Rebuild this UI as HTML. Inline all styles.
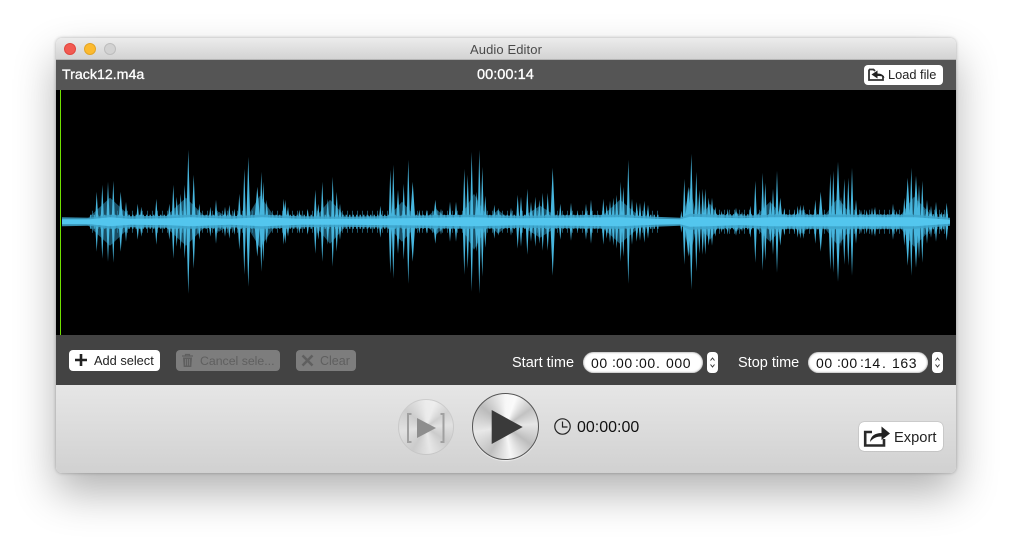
<!DOCTYPE html>
<html><head><meta charset="utf-8"><title>Audio Editor</title>
<style>
html,body{margin:0;padding:0;background:#fff}
body{width:1012px;height:547px;overflow:hidden;position:relative;font-family:"Liberation Sans",sans-serif}
.a{position:absolute}
.win{left:56px;top:38px;width:900px;height:435px;border-radius:6px;box-shadow:0 20px 42px rgba(0,0,0,.3),0 0 3px rgba(0,0,0,.3)}
.title{left:56px;top:38px;width:900px;height:22px;border-radius:6px 6px 0 0;background:linear-gradient(#ececec,#d3d3d3);box-sizing:border-box;border-bottom:1px solid #b4b4b4;text-align:center;font-size:13px;line-height:23px;color:#4a4a4a;letter-spacing:.1px}
.dot{width:12px;height:12px;border-radius:50%;top:43px;box-sizing:border-box}
.btn{background:#fff;border-radius:4px;color:#222;font-size:12px;white-space:nowrap}
.dis{background:#7d7d7d;border-radius:4px;color:#5f5f5f;font-size:12px;white-space:nowrap}
.t{white-space:nowrap}
.field{background:#fff;border-radius:11px;height:21px;width:120px;top:352px;box-shadow:inset 0 0 2px #777}
.field span{position:absolute;top:0;font-size:14px;line-height:23px;color:#111;letter-spacing:.6px;white-space:pre}
.field span.c{top:-1.500px;letter-spacing:0}
.step{background:#fff;border-radius:4px;width:11px;height:21px;top:352px}
.metal{border-radius:50%;background:conic-gradient(#f7f7f7 0deg,#fafafa 20deg,#c2c2c2 55deg,#e6e6e6 85deg,#bdbdbd 125deg,#f6f6f6 170deg,#c0c0c0 210deg,#e8e8e8 260deg,#bbb 310deg,#f7f7f7 360deg);box-sizing:border-box}
</style></head>
<body>
<div class="a win"></div>
<div class="a" style="left:56px;top:60px;width:900px;height:413px;border-radius:0 0 6px 6px;overflow:hidden">
  <div class="a" style="left:0;top:0;width:900px;height:30px;background:#555"></div>
  <div class="a" style="left:0;top:30px;width:900px;height:245px;background:#000"></div>
  <div class="a" style="left:0;top:275px;width:900px;height:50px;background:#434343"></div>
  <div class="a" style="left:0;top:325px;width:900px;height:88px;background:linear-gradient(#e6e6e6,#d1d1d1)"></div>
</div>
<div class="a title">Audio Editor</div>
<div class="a dot" style="left:64px;background:#f25a52;border:1px solid #e2463e"></div>
<div class="a dot" style="left:84px;background:#fcba2f;border:1px solid #e3a526"></div>
<div class="a dot" style="left:104px;background:#d2d2d2;border:1px solid #bdbdbd"></div>

<div class="a t" style="left:62px;top:67px;font-size:14.200px;line-height:16px;color:#fff;-webkit-text-stroke:.3px #fff">Track12.m4a</div>
<div class="a t" style="left:477px;top:67px;font-size:14.600px;line-height:16px;color:#fff;-webkit-text-stroke:.3px #fff">00:00:14</div>

<div class="a btn" style="left:864px;top:65px;width:79px;height:20px"></div>
<svg class="a" style="left:867px;top:66px" width="20" height="17" viewBox="0 0 20 17"><path d="M2 3.500H6.500L8 5M2 3.500V14H16V10" fill="none" stroke="#333" stroke-width="1.800"/><path d="M17.500 12C17 9 14 7.500 10.500 7.500V4.500L4.500 8.500L10.500 12.500V10C13 9.800 15.500 10 17.500 12Z" fill="#222"/></svg>
<div class="a t" style="left:888px;top:68px;font-size:12.800px;line-height:14px;color:#222">Load file</div>

<div class="a" style="left:60px;top:90px;width:1px;height:245px;background:#6fe000"></div>

<svg class="a" style="left:56px;top:90px" width="900" height="245" viewBox="56 90 900 245">
<defs><filter id="b" x="0" y="-20%" width="100%" height="140%"><feGaussianBlur stdDeviation=".35"/></filter></defs>
<g transform="translate(0 221.800)" filter="url(#b)">
<path fill="#2f8db2" opacity=".55" d="M84 0l26-24 26 24-26 24zM160 0l26-24 24 24-24 24zM244 0l16-26 18 26-18 26zM312 0l18-22 20 22-20 22zM384 0l18-20 18 20-18 20zM458 0l16-28 16 28-16 28zM515 0l25-16 25 16-25 16zM596 0l24-22 26 22-26 22zM682 0l8-34 8 34-8 34zM698 0l12-18 12 18-12 18zM750 0l20-20 18 20-18 20zM820 0l18-24 18 24-18 24zM896 0l18-25 24 25-24 25zM205 0l14-10 14 10-14 10zM422 0l14-13 14 13-14 13zM486 0l12-12 14 12-14 12zM726 0l10-10 12 10-12 10zM792 0l10-12 12 12-12 12z"/>
<line x1="92" x2="660" y1="0" y2="0" stroke="#3797bd" stroke-width="22" stroke-dasharray="1 4" opacity=".55"/>
<line x1="684" x2="946" y1="0" y2="0" stroke="#3797bd" stroke-width="24" stroke-dasharray="1 4" opacity=".55"/>
<line x1="90" x2="660" y1="0" y2="0" stroke="#43afd7" stroke-width="14" stroke-dasharray="1.500 2" opacity=".85"/>
<line x1="684" x2="948" y1="0" y2="0" stroke="#43afd7" stroke-width="15" stroke-dasharray="1.500 2" opacity=".85"/>
<path fill="#46b6de" d="M95 0l1.700-30 1.700 30-1.700 30zM100.600 0l1.700-37 1.700 37-1.700 37zM106.300 0l1.700-40 1.700 40-1.700 40zM111.600 0l1.700-41 1.700 41-1.700 41zM118.500 0l2.200-30 2.200 30-2.200 30zM124.300 0l1.700-20 1.700 20-1.700 20zM136 0l1.700-18 1.700 18-1.700 18zM139.600 0l1.700-15 1.700 15-1.700 15zM154.600 0l1.700-23 1.700 23-1.700 23zM167.600 0l1.700-18 1.700 18-1.700 18zM171.600 0l1.700-37 1.700 37-1.700 37zM175 0l1.700-25 1.700 25-1.700 25zM179 0l1.700-28 1.700 28-1.700 28zM183 0l1.700-37 1.700 37-1.700 37zM186.300 0l2-72 2 72-2 72zM191.700 0l2-47 2 47-2 47zM197.600 0l1.700-18 1.700 18-1.700 18zM208.600 0l1.700-15 1.700 15-1.700 15zM214.300 0l1.700-22 1.700 22-1.700 22zM223.300 0l1.700-15 1.700 15-1.700 15zM227.600 0l1.700-17 1.700 17-1.700 17zM232.600 0l1.700-13 1.700 13-1.700 13zM237.600 0l1.700-28 1.700 28-1.700 28zM242.600 0l1.700-53 1.700 53-1.700 53zM246.300 0l2-65 2 65-2 65zM254.300 0l3-35 3 35-3 35zM259.600 0l1.700-50 1.700 50-1.700 50zM261.600 0l1.700-40 1.700 40-1.700 40zM265 0l1.700-22 1.700 22-1.700 22zM282 0l1.700-23 1.700 23-1.700 23zM283.600 0l1.700-22 1.700 22-1.700 22zM286.300 0l1.700-15 1.700 15-1.700 15zM297.600 0l1.700-12 1.700 12-1.700 12zM306 0l1.700-13 1.700 13-1.700 13zM313.600 0l1.700-32 1.700 32-1.700 32zM316.600 0l1.700-18 1.700 18-1.700 18zM320.600 0l1.700-40 1.700 40-1.700 40zM326 0l1.700-23 1.700 23-1.700 23zM331 0l1.700-45 1.700 45-1.700 45zM335 0l1.700-30 1.700 30-1.700 30zM338.300 0l1.700-18 1.700 18-1.700 18z"/>
<path fill="#46b6de" d="M367 0l1.700-7 1.700 7-1.700 7zM378.600 0l1.700-16 1.700 16-1.700 16zM388.600 0l1.700-52 1.700 52-1.700 52zM391.600 0l1.700-57 1.700 57-1.700 57zM396 0l2-32 2 32-2 32zM402 0l1.700-38 1.700 38-1.700 38zM406.600 0l1.700-62 1.700 62-1.700 62zM410 0l2.700-40 2.700 40-2.700 40zM417.600 0l1.700-12 1.700 12-1.700 12zM425 0l1.700-12 1.700 12-1.700 12zM433 0l2.300-22 2.300 22-2.300 22zM439.300 0l1.700-13 1.700 13-1.700 13zM448.300 0l1.700-20 1.700 20-1.700 20zM454.300 0l1.700-20 1.700 20-1.700 20zM462.600 0l1.700-53 1.700 53-1.700 53zM466 0l1.700-47 1.700 47-1.700 47zM470 0l1.700-70 1.700 70-1.700 70zM474.600 0l2.100-30 2.100 30-2.100 30zM477.600 0l1.700-72 1.700 72-1.700 72zM480.600 0l1.700-55 1.700 55-1.700 55zM483.600 0l1.700-26 1.700 26-1.700 26zM492.600 0l1.700-17 1.700 17-1.700 17zM497 0l1.700-14 1.700 14-1.700 14zM509.300 0l1.700-14 1.700 14-1.700 14zM516 0l1.700-27 1.700 27-1.700 27zM519.300 0l1.700-25 1.700 25-1.700 25zM525.600 0l1.700-33 1.700 33-1.700 33zM529.300 0l1.700-20 1.700 20-1.700 20zM533.600 0l1.700-25 1.700 25-1.700 25zM537.600 0l1.700-22 1.700 22-1.700 22zM541 0l1.700-29 1.700 29-1.700 29zM546 0l1.700-29 1.700 29-1.700 29zM550.300 0l2.400-54 2.400 54-2.400 54zM558.600 0l1.700-18 1.700 18-1.700 18zM569.300 0l1.700-19 1.700 19-1.700 19zM576 0l1.700-10 1.700 10-1.700 10zM584.300 0l1.700-18 1.700 18-1.700 18zM589.300 0l1.700-22 1.700 22-1.700 22zM601.600 0l1.700-23 1.700 23-1.700 23zM605 0l1.700-17 1.700 17-1.700 17zM608.300 0l1.700-21 1.700 21-1.700 21zM611.600 0l1.700-24 1.700 24-1.700 24zM615 0l1.700-27 1.700 27-1.700 27zM619 0l1.700-40 1.700 40-1.700 40zM621.600 0l1.700-35 1.700 35-1.700 35zM626.600 0l1.700-62 1.700 62-1.700 62zM630.300 0l1.700-23 1.700 23-1.700 23zM635 0l1.700-20 1.700 20-1.700 20zM638.300 0l1.700-19 1.700 19-1.700 19zM642.600 0l1.700-21 1.700 21-1.700 21zM646.300 0l1.700-17 1.700 17-1.700 17z"/>
<path fill="#46b6de" d="M680 0l1.300-11 1.300 11-1.300 11zM682.600 0l1.700-43 1.700 43-1.700 43zM685 0l3.300-35 3.300 35-3.300 35zM689.300 0l2-68 2 68-2 68zM694.600 0l1.700-50 1.700 50-1.700 50zM697.600 0l1.700-32 1.700 32-1.700 32zM701 0l1.700-33 1.700 33-1.700 33zM703.600 0l1.700-33 1.700 33-1.700 33zM706.600 0l2.100-24 2.100 24-2.100 24zM710 0l2-24 2 24-2 24zM713.600 0l1.700-15 1.700 15-1.700 15zM720 0l1.700-11 1.700 11-1.700 11zM726 0l1.700-13 1.700 13-1.700 13zM734 0l2-14 2 14-2 14zM740.300 0l1.700-10 1.700 10-1.700 10zM748.600 0l1.700-16 1.700 16-1.700 16zM753.600 0l1.700-41 1.700 41-1.700 41zM761 0l1.700-49 1.700 49-1.700 49zM763.600 0l1.700-39 1.700 39-1.700 39zM768.600 0l1.700-22 1.700 22-1.700 22zM771.300 0l1.700-33 1.700 33-1.700 33zM775.300 0l1.700-51 1.700 51-1.700 51zM778 0l2.300-24 2.300 24-2.300 24zM782.600 0l1.700-14 1.700 14-1.700 14zM792.600 0l1.700-11 1.700 11-1.700 11zM796 0l1.700-16 1.700 16-1.700 16zM798.600 0l1.700-17 1.700 17-1.700 17zM801.600 0l1.700-17 1.700 17-1.700 17zM813.600 0l1.700-22 1.700 22-1.700 22zM818.300 0l2.400-30 2.400 30-2.400 30zM828.600 0l1.700-48 1.700 48-1.700 48zM831.600 0l1.700-51 1.700 51-1.700 51zM835.600 0l2.400-60 2.400 60-2.400 60zM839.300 0l1.700-25 1.700 25-1.700 25zM842.600 0l1.700-43 1.700 43-1.700 43zM846.600 0l1.700-44 1.700 44-1.700 44zM850.300 0l1.700-54 1.700 54-1.700 54zM854.300 0l1.700-22 1.700 22-1.700 22zM859.300 0l1.700-12 1.700 12-1.700 12zM865 0l1.700-12 1.700 12-1.700 12zM870.300 0l1.700-14 1.700 14-1.700 14zM873.300 0l1.700-15 1.700 15-1.700 15zM877 0l1.700-8 1.700 8-1.700 8zM891.300 0l1.700-18 1.700 18-1.700 18zM895 0l1.700-11 1.700 11-1.700 11zM902.600 0l1.700-24 1.700 24-1.700 24zM905 0l2.700-44 2.700 44-2.700 44zM909.600 0l1.700-54 1.700 54-1.700 54zM913.300 0l2.700-46 2.700 46-2.700 46zM917.300 0l1.700-37 1.700 37-1.700 37zM920.600 0l1.700-41 1.700 41-1.700 41zM925.300 0l1.700-22 1.700 22-1.700 22zM929.300 0l1.700-16 1.700 16-1.700 16zM934.300 0l1.700-20 1.700 20-1.700 20zM940 0l1.700-10 1.700 10-1.700 10zM945 0l1.700-19 1.700 19-1.700 19z"/>
<path fill="#3ea6cd" opacity=".85" d="M62 -4.500L90 -4L110 -7L130 -5.500L170 -6L190 -7L230 -5.500L262 -7L300 -5.500L345 -5L400 -6L470 -7L520 -6L620 -7L655 -5L680 -4L690 -8L740 -6L770 -7L840 -7L915 -7L950 -4L950 4L915 7L840 7L770 7L740 6L690 8L680 4L655 5L620 7L520 6L470 7L400 6L345 5L300 5.500L262 7L230 5.500L190 7L170 6L130 5.500L110 7L90 4L62 4.500Z"/>
<path fill="#52c6ee" d="M62 -2.500L90 -2.500L110 -4.500L130 -3L170 -3.500L190 -4.500L230 -3L262 -4.500L300 -3L345 -3L400 -3.500L470 -4.500L520 -3.500L620 -4.500L655 -3L680 -2.500L690 -5L740 -3.500L770 -4.500L840 -4.500L915 -4.500L950 -2L950 2L915 4.500L840 4.500L770 4.500L740 3.500L690 5L680 2.500L655 3L620 4.500L520 3.500L470 4.500L400 3.500L345 3L300 3L262 4.500L230 3L190 4.500L170 3.500L130 3L110 4.500L90 2.500L62 2.500Z"/>
</g>
</svg>

<div class="a btn" style="left:69px;top:350px;width:91px;height:21px"></div>
<svg class="a" style="left:74px;top:353px" width="14" height="14" viewBox="0 0 14 14"><path d="M7 1V13M1 7H13" stroke="#222" stroke-width="2.600"/></svg>
<div class="a t" style="left:94px;top:354px;font-size:12.800px;line-height:14px;color:#222">Add select</div>

<div class="a dis" style="left:176px;top:350px;width:104px;height:21px"></div>
<svg class="a" style="left:181px;top:353px" width="13" height="15" viewBox="0 0 13 15"><path d="M1 3H12M4.500 3V1.500H8.500V3" stroke="#5f5f5f" stroke-width="1.200" fill="none"/><path d="M2 4.500H11L10.300 14H2.700Z" fill="#5f5f5f"/><path d="M4.500 6V12.500M6.500 6V12.500M8.500 6V12.500" stroke="#7d7d7d" stroke-width=".8"/></svg>
<div class="a t" style="left:200px;top:354px;font-size:12.300px;line-height:14px;color:#5f5f5f">Cancel sele...</div>

<div class="a dis" style="left:296px;top:350px;width:60px;height:21px"></div>
<svg class="a" style="left:301px;top:354px" width="13" height="13" viewBox="0 0 13 13"><path d="M1.500 1.500L11.500 11.500M11.500 1.500L1.500 11.500" stroke="#5f5f5f" stroke-width="2.600"/></svg>
<div class="a t" style="left:320px;top:354px;font-size:12.500px;line-height:14px;color:#5f5f5f">Clear</div>

<div class="a t" style="left:512px;top:355px;font-size:14.500px;line-height:16px;color:#fff">Start time</div>
<div class="a field" style="left:583px"><span style="left:8px">00</span><span class="c" style="left:29px">:</span><span style="left:33px">00</span><span class="c" style="left:52px">:</span><span style="left:56px">00</span><span style="left:73px">.</span><span style="left:83px">000</span></div>
<div class="a step" style="left:707px"></div>
<svg class="a" style="left:707px;top:352px" width="11" height="21" viewBox="0 0 11 21"><path d="M3.500 8.500L5.500 6L7.500 8.500M3.500 12.500L5.500 15L7.500 12.500" fill="none" stroke="#333" stroke-width="1"/></svg>
<div class="a t" style="left:738px;top:355px;font-size:14.500px;line-height:16px;color:#fff">Stop time</div>
<div class="a field" style="left:808px"><span style="left:8px">00</span><span class="c" style="left:29px">:</span><span style="left:33px">00</span><span class="c" style="left:52px">:</span><span style="left:56px">14</span><span style="left:74px">.</span><span style="left:84px">163</span></div>
<div class="a step" style="left:932px"></div>
<svg class="a" style="left:932px;top:352px" width="11" height="21" viewBox="0 0 11 21"><path d="M3.500 8.500L5.500 6L7.500 8.500M3.500 12.500L5.500 15L7.500 12.500" fill="none" stroke="#333" stroke-width="1"/></svg>

<div class="a metal" style="left:398px;top:399px;width:56px;height:56px;border:1px solid #b8b8b8;opacity:.5"></div>
<svg class="a" style="left:398px;top:399px" width="56" height="56" viewBox="0 0 56 56"><path d="M13.500 15H10V43H13.500M42.500 15H45.500V43H42.500" fill="none" stroke="#a0a0a0" stroke-width="2"/><path d="M19 19V39L38 29Z" fill="#8e8e8e"/></svg>
<div class="a metal" style="left:472px;top:393px;width:67px;height:67px;border:1.500px solid #555;box-shadow:0 1px 1px rgba(255,255,255,.7)"></div>
<svg class="a" style="left:472px;top:393px" width="67" height="67" viewBox="0 0 67 67"><path d="M19.700 17V51L50.700 34Z" fill="#3a3a3a"/></svg>

<svg class="a" style="left:553px;top:417px" width="19" height="19" viewBox="0 0 19 19"><circle cx="9.500" cy="9.500" r="7.700" fill="none" stroke="#222" stroke-width="1.200"/><path d="M9.500 4.500V10H14.500" fill="none" stroke="#222" stroke-width="1.200"/></svg>
<div class="a t" style="left:577px;top:419px;font-size:16px;line-height:17px;color:#111">00:00:00</div>

<div class="a btn" style="left:859px;top:422px;width:84px;height:29px;border-radius:5px;box-shadow:0 0 1px rgba(0,0,0,.5)"></div>
<svg class="a" style="left:862px;top:424px" width="30" height="24" viewBox="0 0 30 24"><path d="M10 8H3.200V21.500H22V15" fill="none" stroke="#2a2a2a" stroke-width="2.600"/><path d="M8 18C8.500 12 13 9 19.500 9V2.500L28 9.500L19.500 16V12.500C15 12.500 11 14 8 18Z" fill="#222"/></svg>
<div class="a t" style="left:894px;top:430px;font-size:14.700px;line-height:16px;color:#222">Export</div>
</body></html>
